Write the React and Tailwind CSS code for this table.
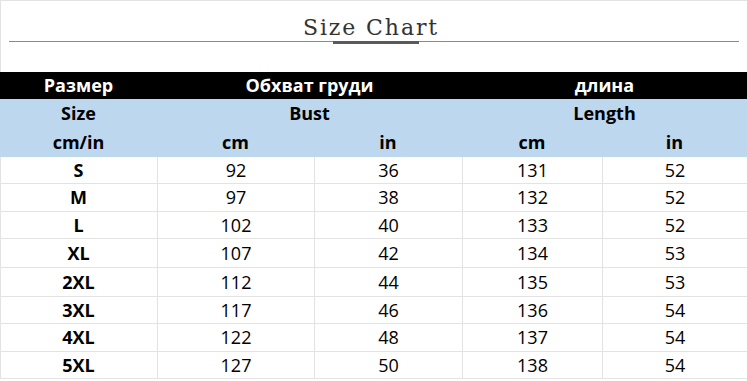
import React from "react";

const rows = [
  ["S", "92", "36", "131", "52", "h-[27px]"],
  ["M", "97", "38", "132", "52", "h-[28px]"],
  ["L", "102", "40", "133", "52", "h-[27px]"],
  ["XL", "107", "42", "134", "53", "h-[29px]"],
  ["2XL", "112", "44", "135", "53", "h-[29px]"],
  ["3XL", "117", "46", "136", "54", "h-[27px]"],
  ["4XL", "122", "48", "137", "54", "h-[28px]"],
  ["5XL", "127", "50", "138", "54", "h-[27px]"],
];

const cols = "grid grid-cols-[157px_157px_148px_140px_145px]";

export default function App() {
  return (
    <div
      className="w-[747px] h-[381px] bg-white overflow-hidden text-black"
      style={{ fontFamily: '"Open Sans", "Noto Sans", sans-serif' }}
    >
      <div className="relative h-[72px] border-t border-l border-[#e3e3e3]">
        <div
          className="pt-[14px] text-center text-[22px] leading-[26px] tracking-[1.9px] text-[#333] pr-[6px]"
          style={{ fontFamily: '"DejaVu Serif", serif' }}
        >
          Size Chart
        </div>
        <div className="mx-[8px] h-px bg-[#8a8a8a]" />
        <div className="ml-[332px] -mt-[1px] w-[86px] h-[3px] bg-[#5a5a5a]" />
      </div>

      <div className={`${cols} h-[27px] bg-black text-white font-bold text-[18px] leading-[27px]`}>
        <div className="text-center">Размер</div>
        <div className="col-span-2 text-center">Обхват груди</div>
        <div className="col-span-2 text-center">длина</div>
      </div>

      <div className="bg-[#bdd7ee] font-bold text-[18px]">
        <div className={`${cols} h-[29px] leading-[29px]`}>
          <div className="text-center">Size</div>
          <div className="col-span-2 text-center">Bust</div>
          <div className="col-span-2 text-center">Length</div>
        </div>
        <div className={`${cols} h-[29px] leading-[29px]`}>
          <div className="text-center">cm/in</div>
          <div className="text-center">cm</div>
          <div className="text-center">in</div>
          <div className="text-center">cm</div>
          <div className="text-center">in</div>
        </div>
      </div>

      <div className="border-l border-[#e3e3e3]">
        {rows.map((r) => (
          <div
            key={r[0]}
            className={`${cols} ${r[5]} border-b border-[#e3e3e3] text-[18px] items-center`}
          >
            <div className="font-bold border-r border-[#e3e3e3] h-full flex items-center justify-center -ml-px">
              {r[0]}
            </div>
            <div className="border-r border-[#e3e3e3] h-full flex items-center justify-center">{r[1]}</div>
            <div className="border-r border-[#e3e3e3] h-full flex items-center justify-center">{r[2]}</div>
            <div className="border-r border-[#e3e3e3] h-full flex items-center justify-center">{r[3]}</div>
            <div className="border-r border-[#e3e3e3] h-full flex items-center justify-center">{r[4]}</div>
          </div>
        ))}
      </div>
    </div>
  );
}
